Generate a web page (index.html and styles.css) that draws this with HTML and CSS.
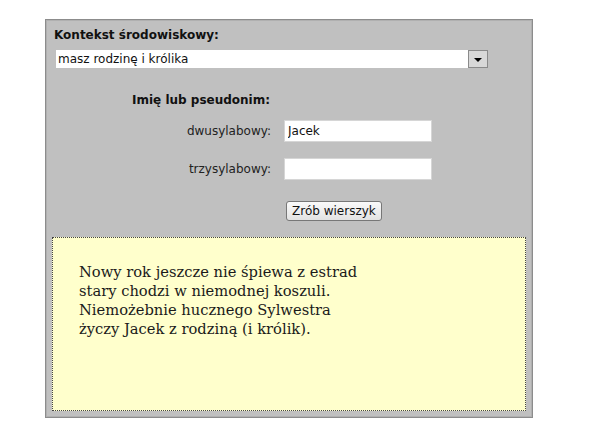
FILE: index.html
```html
<!DOCTYPE html>
<html lang="pl">

<head>
  <meta charset="UTF-8" />
  <title>Wierszyk noworoczny</title>
  <link rel="stylesheet" href="styles.css">
</head>

<body>

  <div class="panel">
    <form class="poem-form">
      <label class="title" for="context">Kontekst środowiskowy:</label>
      <div class="select-wrap">
        <select id="context" name="context">
          <option>masz rodzinę i królika</option>
          <option>masz rodzinę</option>
          <option>jesteś sam</option>
        </select>
        <span class="arrow"></span>
      </div>

      <div class="names-title">Imię lub pseudonim:</div>
      <div class="names">
        <label for="two">dwusylabowy:</label>
        <input id="two" name="two" type="text" value="Jacek">
        <label for="three">trzysylabowy:</label>
        <input id="three" name="three" type="text">
        <span></span>
        <div><button type="button">Zrób wierszyk</button></div>
      </div>
    </form>

    <div class="poem">
      <p>
        Nowy rok jeszcze nie śpiewa z estrad<br>
        stary chodzi w niemodnej koszuli.<br>
        Niemożebnie hucznego Sylwestra<br>
        życzy Jacek z rodziną (i królik).
      </p>
    </div>
  </div>

</body>

</html>
```

FILE: styles.css
```css
body {
  margin: 0;
  background: #fff;
  font-family: "DejaVu Sans", Verdana, sans-serif;
  font-size: 12px;
  color: #111;
}

.panel {
  margin: 19px 0 0 45px;
  width: 484px;
  background: #c0c0c0;
  border: 1px solid #8c8c8c;
  box-shadow: inset 0 0 0 1px #b0b0b0;
  padding: 1px;
}

.poem-form {
  padding: 6px 0 0 7px;
}

.title {
  display: block;
  font-weight: bold;
  height: 17px;
  line-height: 17px;
}

.select-wrap {
  display: flex;
  width: 432px;
  height: 18px;
  margin: 6px 0 0 2px;
}

.select-wrap select {
  flex: 1;
  appearance: none;
  -webkit-appearance: none;
  border: none;
  border-radius: 0;
  background: #fff;
  font-family: inherit;
  font-size: 12px;
  padding: 0 0 0 2px;
  height: 18px;
  color: #111;
}

.arrow {
  position: relative;
  width: 18px;
  height: 16px;
  background: #d8d8d8;
  border: 1px solid #8a8a8a;
}

.arrow::after {
  content: "";
  position: absolute;
  left: 5px;
  top: 7px;
  border-left: 4px solid transparent;
  border-right: 4px solid transparent;
  border-top: 4px solid #000;
}

.names-title {
  margin: 25px 0 0 78px;
  height: 14px;
  line-height: 14px;
  font-weight: bold;
}

.names {
  display: grid;
  grid-template-columns: 224px 148px;
  column-gap: 13px;
  row-gap: 16px;
  align-items: center;
  margin: 13px 0 0 -7px;
}

.names label {
  text-align: right;
  color: #222;
}

.names input {
  height: 22px;
  box-sizing: border-box;
  border: 1px solid #d6d6d6;
  background: #fff;
  font-family: inherit;
  font-size: 12px;
  padding: 0 3px;
  color: #111;
}

.names button {
  margin: 5px 0 0 2px;
  height: 20px;
  padding: 0 5px;
  font-family: inherit;
  font-size: 12px;
  color: #111;
  background: linear-gradient(#fafafa, #e2e2e2);
  border: 1px solid #777;
  border-radius: 3px;
}

.poem {
  margin: 16px 5px 5px 5px;
  height: 172px;
  background: #ffffcc;
  border: 1px dotted #444;
}

.poem p {
  margin: 24px 0 0 26px;
  font-family: "DejaVu Serif", Georgia, serif;
  font-size: 14.7px;
  line-height: 19px;
  color: #1a1a1a;
}
```
